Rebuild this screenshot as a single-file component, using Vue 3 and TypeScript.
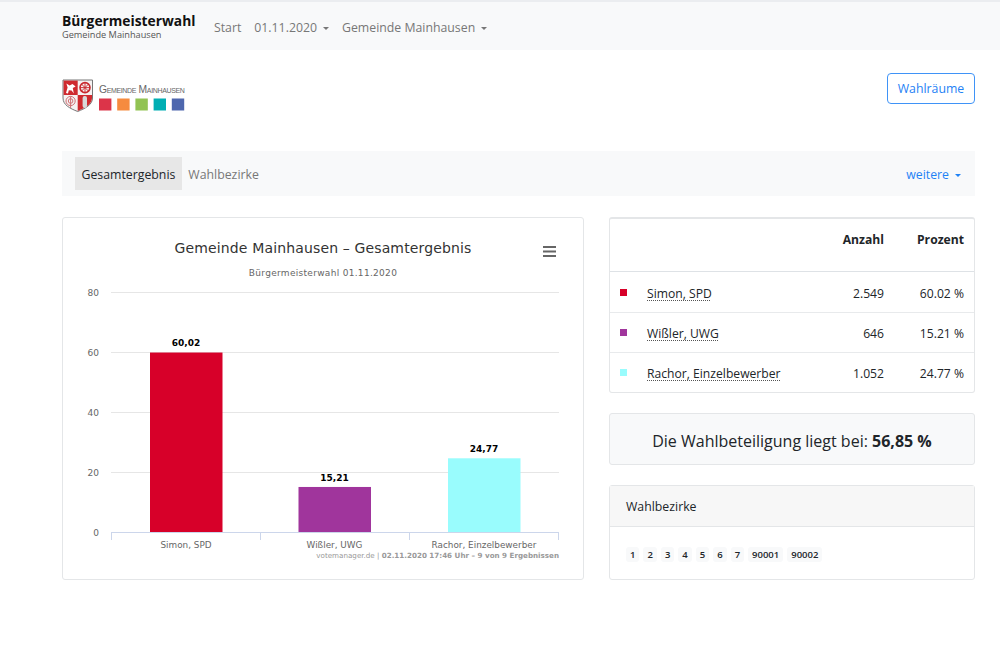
<script setup lang="ts">
// Ergebnisse der Kandidaten
const results = [
  { name: 'Simon, SPD', votes: '2.549', pct: 60.02, color: '#d70029', x: 150 },
  { name: 'Wißler, UWG', votes: '646', pct: 15.21, color: '#a0359c', x: 298.5 },
  { name: 'Rachor, Einzelbewerber', votes: '1.052', pct: 24.77, color: '#99fcfd', x: 448 },
]

const districts = ['1', '2', '3', '4', '5', '6', '7', '90001', '90002']
const gridLines = [80, 60, 40, 20]
const axisY = 532
const logoColors = ['#dc3449', '#f68b3f', '#92c353', '#00aeb3', '#4e67ae']

const yFor = (v: number) => axisY - v * 3
const pctLabel = (v: number) => v.toFixed(2).replace('.', ',')
</script>

<template>
  <div class="page">
    <nav class="navbar">
      <div class="brand">
        <strong>Bürgermeisterwahl</strong>
        <small>Gemeinde Mainhausen</small>
      </div>
      <a class="nav-link">Start</a>
      <a class="nav-link caret">01.11.2020</a>
      <a class="nav-link caret">Gemeinde Mainhausen</a>
    </nav>

    <main class="container">
      <header class="head">
        <svg class="logo" width="124" height="36" viewBox="0 0 124 36">
          <!-- Wappen -->
          <path d="M1 1 H30.5 V19 C30.5 26 23 29.5 15.7 32.5 C8 29.5 1 26 1 19 Z" fill="#f6f2f2" stroke="#777" stroke-width="1" />
          <path d="M1.6 1.6 H15.7 V16 H1.6 Z" fill="#cf2a2f" />
          <path d="M15.7 16 H30 V19 C30 25.5 23 29 15.7 32 Z" fill="#cf2a2f" />
          <path d="M4 14 L5.6 8.5 L4.4 4.6 L7.6 6.4 L10.5 5 L13.6 7.4 L10.8 9 L11.8 14.4 L9.6 11.4 L6.8 11.2 L6 14.4 Z" fill="#fff" />
          <circle cx="23" cy="8.6" r="5" fill="none" stroke="#c8282d" stroke-width="1.6" />
          <path d="M23 3.6 V13.6 M18 8.6 H28 M19.5 5.1 L26.5 12.1 M26.5 5.1 L19.5 12.1" stroke="#c8282d" stroke-width="0.9" />
          <circle cx="8.6" cy="22" r="4.6" fill="none" stroke="#d07074" stroke-width="1" />
          <circle cx="8.6" cy="22" r="2.3" fill="none" stroke="#d07074" stroke-width="1" />
          <path d="M8.6 17.4 V29" stroke="#d07074" stroke-width="1" />
          <rect x="20.6" y="17" width="4.4" height="12" rx="2" fill="#d9d9d9" />
          <text class="logo-text" x="37" y="14">Gemeinde Mainhausen</text>
          <rect v-for="(c, i) in logoColors" :key="c" :x="37 + i * 18.2" y="19.5" width="12.4" height="12" :fill="c" />
        </svg>
        <button class="btn-outline">Wahlräume</button>
      </header>

      <div class="subnav">
        <a class="tab active">Gesamtergebnis</a>
        <a class="tab">Wahlbezirke</a>
        <a class="more caret">weitere</a>
      </div>

      <div class="columns">
        <section class="card chart-card">
          <svg class="chart" width="520" height="361" viewBox="63 218 520 361">
            <text class="chart-title" x="323" y="253">Gemeinde Mainhausen – Gesamtergebnis</text>
            <text class="chart-sub" x="323" y="276">Bürgermeisterwahl 01.11.2020</text>

            <path d="M543 247 H556 M543 251.5 H556 M543 256 H556" stroke="#666" stroke-width="2.2" />

            <g v-for="g in gridLines" :key="g">
              <line x1="111" x2="559" :y1="yFor(g) + 0.5" :y2="yFor(g) + 0.5" stroke="#e6e6e6" />
              <text class="y-label" x="99" :y="yFor(g) + 3.5">{{ g }}</text>
            </g>
            <text class="y-label" x="99" :y="axisY + 3.5">0</text>

            <g v-for="r in results" :key="r.name">
              <rect :x="r.x" :y="yFor(r.pct) + 0.6" width="72.5" :height="r.pct * 3 - 0.6" :fill="r.color" />
              <text class="bar-label" :x="r.x + 36" :y="yFor(r.pct) - 5.5">{{ pctLabel(r.pct) }}</text>
              <text class="x-label" :x="r.x + 36" y="547.5">{{ r.name }}</text>
            </g>

            <path d="M111 532.5 H559 M111.5 532 V540 M260.5 532 V540 M409.5 532 V540 M558.5 532 V540" stroke="#ccd6eb" fill="none" />
            <text class="credit" x="559" y="558">votemanager.de | <tspan font-weight="700">02.11.2020 17:46 Uhr – 9 von 9 Ergebnissen</tspan></text>
          </svg>
        </section>

        <aside class="side">
          <div class="card table-card">
            <div class="row head-row">
              <span class="name"></span>
              <span class="num">Anzahl</span>
              <span class="pct">Prozent</span>
            </div>
            <div v-for="r in results" :key="r.name" class="row">
              <i class="swatch" :style="{ background: r.color }"></i>
              <span class="name"><abbr>{{ r.name }}</abbr></span>
              <span class="num">{{ r.votes }}</span>
              <span class="pct">{{ r.pct.toFixed(2) }} %</span>
            </div>
          </div>

          <div class="card turnout"><span>Die Wahlbeteiligung liegt bei: <b>56,85 %</b></span></div>

          <div class="card districts">
            <div class="card-header">Wahlbezirke</div>
            <div class="card-body">
              <span v-for="d in districts" :key="d" class="badge">{{ d }}</span>
            </div>
          </div>
        </aside>
      </div>
    </main>
  </div>
</template>

<style>
html,
body {
  background: #fff;
}
</style>

<style scoped>
.page {
  font-family: 'Open Sans', 'Noto Sans', sans-serif;
  font-size: 12.15px;
  color: #212529;
  height: 670px;
  overflow: hidden;
}

.navbar {
  display: flex;
  align-items: center;
  height: 48px;
  padding-left: 62px;
  background: #f8f9fa;
  border-top: 2px solid #ebedf0;
}

.brand {
  display: flex;
  flex-direction: column;
  margin-right: 18.5px;
  margin-top: 1px;
  color: #111;
}
.brand strong {
  font-size: 13.8px;
  line-height: 16px;
}
.brand small {
  font-size: 9.2px;
  line-height: 11px;
  color: #555;
}

.nav-link {
  font-size: 12.3px;
  color: #777;
  margin-right: 13px;
  margin-top: 2px;
}

.caret::after {
  content: '';
  display: inline-block;
  margin-left: 6px;
  vertical-align: 2px;
  border-top: 3.5px solid currentColor;
  border-left: 3px solid transparent;
  border-right: 3px solid transparent;
}

.container {
  width: 913px;
  margin-left: 62px;
}

.head {
  display: flex;
  justify-content: space-between;
  padding-top: 23px;
  height: 101px;
  box-sizing: border-box;
}
.logo {
  margin-top: 6px;
}
.logo-text {
  font-family: 'Liberation Sans', sans-serif;
  font-size: 10.3px;
  font-variant: small-caps;
  fill: #666;
  letter-spacing: -0.35px;
}
.btn-outline {
  width: 88px;
  height: 31px;
  background: #fff;
  border: 1px solid #3f93f7;
  border-radius: 4px;
  color: #1f82f5;
  font-family: inherit;
  font-size: 12.3px;
  padding: 0;
}

.subnav {
  display: flex;
  align-items: center;
  height: 45px;
  padding: 0 13px;
  background: #f8f9fa;
  margin-bottom: 21px;
}
.tab {
  padding: 8.5px 6.5px 7.5px;
  font-size: 12.3px;
  line-height: 17px;
  color: #777;
}
.tab.active {
  background: #e7e7e7;
  color: #212529;
}
.more {
  margin-left: auto;
  margin-top: 2px;
  margin-right: 1px;
  color: #1f82f5;
  font-size: 12.3px;
}

.columns {
  display: flex;
  gap: 25px;
}

.card {
  border: 1px solid #e4e6e8;
  border-radius: 3px;
  box-sizing: border-box;
}

.chart-card {
  width: 522px;
  height: 363px;
}
.chart {
  display: block;
  font-family: 'DejaVu Sans', sans-serif;
}
.chart-title {
  font-size: 14px;
  letter-spacing: 0.14px;
  text-anchor: middle;
  fill: #333;
}
.chart-sub {
  font-size: 9px;
  letter-spacing: 0.3px;
  text-anchor: middle;
  fill: #666;
}
.y-label {
  font-size: 9px;
  text-anchor: end;
  fill: #666;
}
.x-label {
  font-size: 8.85px;
  text-anchor: middle;
  fill: #666;
}
.bar-label {
  font-size: 9px;
  font-weight: 700;
  text-anchor: middle;
  fill: #000;
}
.credit {
  font-size: 7.15px;
  text-anchor: end;
  fill: #999;
}

.side {
  width: 366px;
  display: flex;
  flex-direction: column;
  gap: 20px;
}

.table-card {
  height: 176px;
  border-top-width: 2px;
}
.row {
  display: flex;
  align-items: center;
  height: 40px;
  padding: 2px 10px 0;
  box-sizing: border-box;
  border-top: 1px solid #e8eaec;
}
.head-row {
  height: 53px;
  border-top: 0;
  border-bottom: 1px solid #dee2e6;
  align-items: flex-start;
  padding-top: 12px;
  font-weight: 700;
}
.head-row + .row {
  border-top: 0;
}
.swatch {
  width: 7px;
  height: 7px;
  margin-right: 20px;
  margin-top: -2px;
  flex: none;
}
.name {
  flex: 1;
}
abbr {
  text-decoration: underline dotted #555;
  text-underline-offset: 2px;
}
.num {
  width: 60px;
  text-align: right;
}
.pct {
  width: 80px;
  text-align: right;
}

.turnout {
  height: 52px;
  padding-top: 3px;
  display: flex;
  align-items: center;
  justify-content: center;
  background: #f8f9fa;
  font-size: 16px;
}

.districts {
  height: 95px;
}
.card-header {
  height: 40px;
  display: flex;
  align-items: center;
  padding-left: 16px;
  background: #f7f7f7;
  border-bottom: 1px solid #e4e6e8;
  font-size: 12.3px;
}
.card-body {
  display: flex;
  gap: 4px;
  padding: 20px 16px;
}
.badge {
  padding: 0 4px;
  height: 15px;
  line-height: 15px;
  background: #f8f9fa;
  border-radius: 3px;
  font-size: 9.5px;
  font-weight: 600;
}
</style>
